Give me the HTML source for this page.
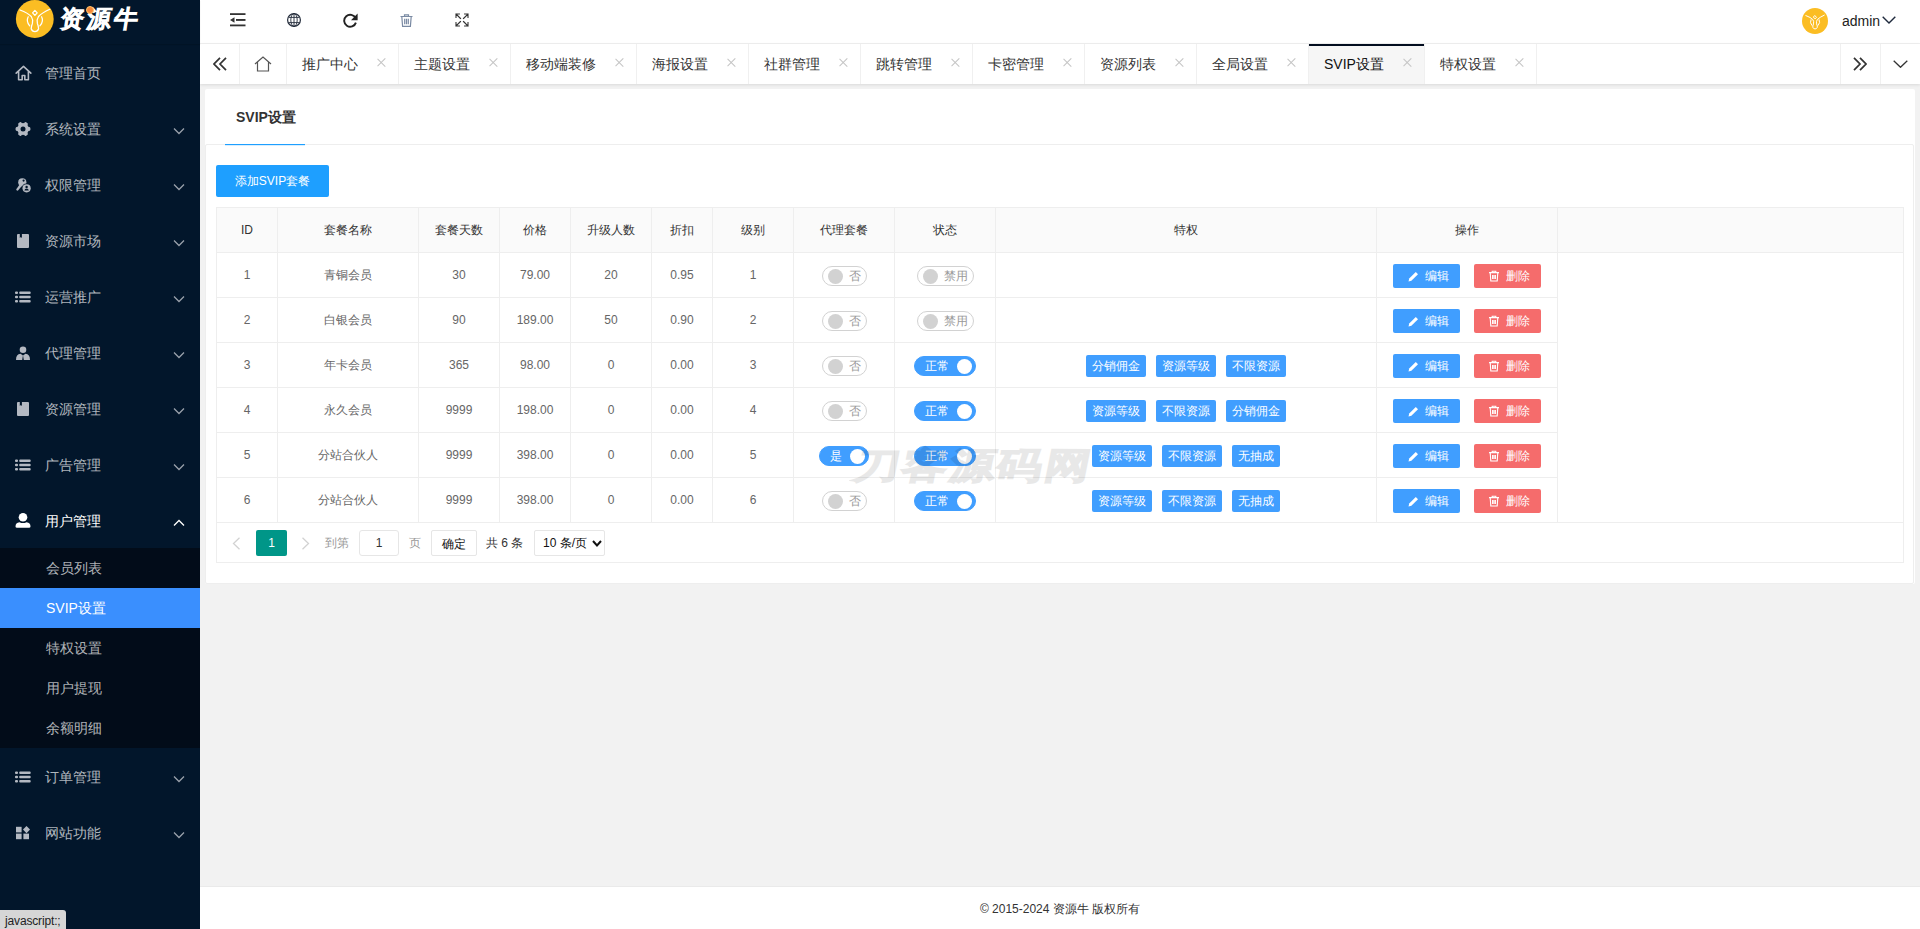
<!DOCTYPE html>
<html><head><meta charset="utf-8">
<style>
*{margin:0;padding:0;box-sizing:border-box}
html,body{width:1920px;height:929px;overflow:hidden}
body{position:relative;background:#f2f2f2;font-family:"Liberation Sans",sans-serif;font-size:14px;color:#333}
.abs{position:absolute}
/* sidebar */
#side{position:absolute;left:0;top:0;width:200px;height:929px;background:#02162b;z-index:5}
#logo{position:absolute;left:0;top:0;width:200px;height:44px;background:#02162b;box-shadow:0 1px 1px rgba(0,0,0,.12)}
.mi{position:absolute;left:0;width:200px;height:56px;color:rgba(255,255,255,.7)}
.mi .t{position:absolute;left:45px;top:1px;line-height:56px;font-size:14px}
.mi .ic{position:absolute;left:15px;top:20px}
.mi .ar{position:absolute;left:173px;top:27px;width:12px;height:8px}
#sub{position:absolute;left:0;top:548px;width:200px;height:200px;background:#020c19}
.si{position:absolute;left:0;width:200px;height:40px;line-height:41px;padding-left:46px;font-size:14px;color:rgba(255,255,255,.7)}
/* header */
#hdr{position:absolute;left:200px;top:0;width:1720px;height:44px;background:#fff;border-bottom:1px solid #f0f0f0}
#tabs{position:absolute;left:200px;top:44px;width:1720px;height:40px;background:#fff;box-shadow:0 1px 3px rgba(0,0,0,.1)}
.tab{position:absolute;top:0;height:40px;border-right:1px solid #f0f0f0;font-size:14px;line-height:40px;color:#333}
.tab .tx{position:absolute;left:15px;top:0}
.tab .x{position:absolute;right:12px;top:14px;width:9px;height:9px}
.tab .x:before,.tab .x:after{content:"";position:absolute;left:-1px;top:4px;width:10.5px;height:1px;background:#c4c4c4;transform:rotate(45deg)}
.tab .x:after{transform:rotate(-45deg)}
.tab.act{background:#f6f6f6;color:#111}
.tab.act:before{content:"";position:absolute;left:0;top:0;right:0;height:2px;background:#020d1f}
/* card */
#card{position:absolute;left:205px;top:89px;width:1710px;height:495px;background:#fff;border-radius:2px}
.ttl{font-size:14px;font-weight:bold;color:#333}
.btnadd{background:#1e9fff;color:#fff;font-size:12px;text-align:center;border-radius:2px}
.hl{height:1px;background:#eee}
.vl{width:1px;background:#eee}
.th,.td{height:44px;line-height:44px;text-align:center;font-size:12px;white-space:nowrap}
.th{color:#333}
.td{color:#666}
.sw{height:20px;border:1px solid #d2d2d2;border-radius:20px;background:#fff}
.sw i{position:absolute;top:2px;width:15px;height:15px;border-radius:50%;background:#d2d2d2}
.sw em{position:absolute;top:0;line-height:18px;font-size:12px;font-style:normal;color:#999}
.sw.on{border-color:#409eff;background:#409eff}
.sw.on i{background:#fff}
.sw.on em{color:#fff}
.tag{height:22px;line-height:22px;background:#409eff;color:#fff;font-size:12px;text-align:center;border-radius:2px}
.obtn{width:67px;height:24px;line-height:24px;color:#fff;font-size:12px;border-radius:2px}
.obtn .ico{position:absolute}
.obtn span{position:absolute;left:32px;top:0}
.pg{height:26px;line-height:26px;font-size:12px}
.wm{font-size:36px;line-height:44px;color:#000;-webkit-text-stroke:2.6px #000;opacity:.085;letter-spacing:2px;transform:matrix(1.25,0,-0.2,1,0,0);transform-origin:0 50%;white-space:nowrap}
#foot{position:absolute;left:200px;top:886px;width:1720px;height:43px;background:#fff;border-top:1px solid #eaeaea;text-align:center;font-size:12px;line-height:45px;color:#333}
#status{position:absolute;z-index:10;left:0;top:910px;width:66px;height:19px;overflow:hidden;background:#d6d6d6;border-top-right-radius:3px;font-size:12px;line-height:23px;padding-left:5px;color:#222;letter-spacing:-0.15px}
</style></head>
<body>
<div id="side">
  <div id="logo">
    <svg class="abs" style="left:14px;top:0" width="42" height="40" viewBox="0 0 42 40">
      <circle cx="20.8" cy="19" r="18.9" fill="#fbbd23"/>
      
      <g fill="none" stroke="#fff" stroke-width="1.25" stroke-linecap="round" stroke-linejoin="round">
        <path d="M6 10 Q14 13 17.3 16.5 Q19.3 19.5 18.4 23.5 Q17.2 26.5 17.2 28.8 Q18.2 31.6 20.9 31.6 Q23.6 31.6 24.6 28.8 Q24.6 26.5 23.4 23.5 Q22.5 19.5 24.5 16.5 Q28 13 35.8 9.3"/>
        <path d="M20.9 10.4 L23.2 12.9 L20.9 15.4 L18.6 12.9z"/>
        <path d="M14.2 16.8 Q11.8 21.5 15.7 25.9 M27.6 16.8 Q30 21.5 25.9 25.9"/>
      </g>
    </svg>
    <div class="abs" style="left:58px;top:5px;font-size:24px;line-height:28px;color:#fff;-webkit-text-stroke:1.5px #fff;letter-spacing:3px;transform:skewX(-9deg);transform-origin:0 100%">资源牛</div>
    <div class="abs" style="left:86px;top:6px;width:8px;height:8px;border-radius:50%;background:#f5883a;border:1px solid #ffc46a"></div>
  </div>
  <!-- 管理首页 -->
  <div class="mi" style="top:44px"><span class="t">管理首页</span>
    <svg class="ic" style="left:14.5px;top:21px" width="17" height="16" viewBox="0 0 18 17"><path d="M1.2 8.6 L9 1.4 L16.8 8.6 M3.8 6.4 V15.6 H7.6 V11.2 H10.4 V15.6 H14.2 V6.4" fill="none" stroke="#b4b9c2" stroke-width="1.7" stroke-linejoin="round" stroke-linecap="round"/></svg>
  </div>
  <div class="mi" style="top:100px"><span class="t">系统设置</span>
    <svg class="ic" style="left:15px;top:21px" width="16" height="16" viewBox="0 0 16 16"><g fill="#b4b9c2"><rect x="6.1" y="0.6" width="3.8" height="3.4" rx="1.3" transform="rotate(30 8 8)"/><rect x="6.1" y="0.6" width="3.8" height="3.4" rx="1.3" transform="rotate(90 8 8)"/><rect x="6.1" y="0.6" width="3.8" height="3.4" rx="1.3" transform="rotate(150 8 8)"/><rect x="6.1" y="0.6" width="3.8" height="3.4" rx="1.3" transform="rotate(210 8 8)"/><rect x="6.1" y="0.6" width="3.8" height="3.4" rx="1.3" transform="rotate(270 8 8)"/><rect x="6.1" y="0.6" width="3.8" height="3.4" rx="1.3" transform="rotate(330 8 8)"/><circle cx="8" cy="8" r="5.9"/></g><circle cx="8" cy="8" r="2.5" fill="#02162b"/></svg>
    <svg class="ar" viewBox="0 0 12 8"><path d="M1 1.5 L6 6.5 L11 1.5" fill="none" stroke="#9aa1ab" stroke-width="1.3"/></svg>
  </div>
  <div class="mi" style="top:156px"><span class="t">权限管理</span>
    <svg class="ic" style="left:16px;top:22px" width="15" height="15" viewBox="0 0 15 15"><g fill="#b4b9c2"><circle cx="6.3" cy="4.3" r="4.1"/><path d="M3.6 6.4 L0.3 11.2 Q0 12.2 1 12.6 L1.8 12.8 L5.6 8.2z"/></g><circle cx="7.6" cy="2.6" r="1.1" fill="#02162b"/><circle cx="10.6" cy="10.3" r="4.9" fill="#02162b"/><circle cx="10.6" cy="10.3" r="4.1" fill="#b4b9c2"/><g fill="#02162b"><circle cx="10.6" cy="8.9" r="1.2"/><path d="M8.4 12.4 Q8.6 10.6 10.6 10.6 Q12.6 10.6 12.8 12.4z"/></g></svg>
    <svg class="ar" viewBox="0 0 12 8"><path d="M1 1.5 L6 6.5 L11 1.5" fill="none" stroke="#9aa1ab" stroke-width="1.3"/></svg>
  </div>
  <div class="mi" style="top:212px"><span class="t">资源市场</span>
    <svg class="ic" style="left:17px;top:22px" width="12" height="14" viewBox="0 0 12 14"><path fill="#b4b9c2" d="M1 0h10a1 1 0 0 1 1 1v12a1 1 0 0 1-1 1H1a1 1 0 0 1-1-1V1a1 1 0 0 1 1-1z M2.8 0v4l1.05-0.9L4.9 4V0z" fill-rule="evenodd"/></svg>
    <svg class="ar" viewBox="0 0 12 8"><path d="M1 1.5 L6 6.5 L11 1.5" fill="none" stroke="#9aa1ab" stroke-width="1.3"/></svg>
  </div>
  <div class="mi" style="top:268px"><span class="t">运营推广</span>
    <svg class="ic" style="left:15px;top:23px" width="16" height="12" viewBox="0 0 16 12"><g fill="#b4b9c2"><rect x="0" y="0.5" width="3" height="2.6" rx="1"/><rect x="4.2" y="0.5" width="11.5" height="2.6" rx="1"/><rect x="0" y="4.7" width="3" height="2.6" rx="1"/><rect x="4.2" y="4.7" width="11.5" height="2.6" rx="1"/><rect x="0" y="8.9" width="3" height="2.6" rx="1"/><rect x="4.2" y="8.9" width="11.5" height="2.6" rx="1"/></g></svg>
    <svg class="ar" viewBox="0 0 12 8"><path d="M1 1.5 L6 6.5 L11 1.5" fill="none" stroke="#9aa1ab" stroke-width="1.3"/></svg>
  </div>
  <div class="mi" style="top:324px"><span class="t">代理管理</span>
    <svg class="ic" style="left:16px;top:22px" width="14" height="14" viewBox="0 0 14 14"><g fill="#b4b9c2"><circle cx="7" cy="3.8" r="3.3"/><path d="M0 14 Q0 8 4.5 7.8 L7 9.5 L9.5 7.8 Q14 8 14 14z"/></g><path d="M7 9.3 L6.2 14 H7.8z" fill="#02162b"/></svg>
    <svg class="ar" viewBox="0 0 12 8"><path d="M1 1.5 L6 6.5 L11 1.5" fill="none" stroke="#9aa1ab" stroke-width="1.3"/></svg>
  </div>
  <div class="mi" style="top:380px"><span class="t">资源管理</span>
    <svg class="ic" style="left:17px;top:22px" width="12" height="14" viewBox="0 0 12 14"><path fill="#b4b9c2" d="M1 0h10a1 1 0 0 1 1 1v12a1 1 0 0 1-1 1H1a1 1 0 0 1-1-1V1a1 1 0 0 1 1-1z M2.8 0v4l1.05-0.9L4.9 4V0z" fill-rule="evenodd"/></svg>
    <svg class="ar" viewBox="0 0 12 8"><path d="M1 1.5 L6 6.5 L11 1.5" fill="none" stroke="#9aa1ab" stroke-width="1.3"/></svg>
  </div>
  <div class="mi" style="top:436px"><span class="t">广告管理</span>
    <svg class="ic" style="left:15px;top:23px" width="16" height="12" viewBox="0 0 16 12"><g fill="#b4b9c2"><rect x="0" y="0.5" width="3" height="2.6" rx="1"/><rect x="4.2" y="0.5" width="11.5" height="2.6" rx="1"/><rect x="0" y="4.7" width="3" height="2.6" rx="1"/><rect x="4.2" y="4.7" width="11.5" height="2.6" rx="1"/><rect x="0" y="8.9" width="3" height="2.6" rx="1"/><rect x="4.2" y="8.9" width="11.5" height="2.6" rx="1"/></g></svg>
    <svg class="ar" viewBox="0 0 12 8"><path d="M1 1.5 L6 6.5 L11 1.5" fill="none" stroke="#9aa1ab" stroke-width="1.3"/></svg>
  </div>
  <div class="mi" style="top:492px;color:#fff"><span class="t">用户管理</span>
    <svg class="ic" style="left:15px;top:21px" width="16" height="15" viewBox="0 0 16 15"><g fill="#fff"><circle cx="8" cy="4.3" r="4.3"/><path d="M0.5 13.5 Q0.5 9.5 4.5 9.2 Q8 11 11.5 9.2 Q15.5 9.5 15.5 13.5 Q15.5 14.8 14 14.8 H2 Q0.5 14.8 0.5 13.5z"/></g></svg>
    <svg class="ar" viewBox="0 0 12 8"><path d="M1 6.5 L6 1.5 L11 6.5" fill="none" stroke="#fff" stroke-width="1.3"/></svg>
  </div>
  <div id="sub">
    <div class="si" style="top:0">会员列表</div>
    <div class="si" style="top:40px;background:#3a8ffe;color:#fff">SVIP设置</div>
    <div class="si" style="top:80px">特权设置</div>
    <div class="si" style="top:120px">用户提现</div>
    <div class="si" style="top:160px">余额明细</div>
  </div>
  <div class="mi" style="top:748px"><span class="t">订单管理</span>
    <svg class="ic" style="left:15px;top:23px" width="16" height="12" viewBox="0 0 16 12"><g fill="#b4b9c2"><rect x="0" y="0.5" width="3" height="2.6" rx="1"/><rect x="4.2" y="0.5" width="11.5" height="2.6" rx="1"/><rect x="0" y="4.7" width="3" height="2.6" rx="1"/><rect x="4.2" y="4.7" width="11.5" height="2.6" rx="1"/><rect x="0" y="8.9" width="3" height="2.6" rx="1"/><rect x="4.2" y="8.9" width="11.5" height="2.6" rx="1"/></g></svg>
    <svg class="ar" viewBox="0 0 12 8"><path d="M1 1.5 L6 6.5 L11 1.5" fill="none" stroke="#9aa1ab" stroke-width="1.3"/></svg>
  </div>
  <div class="mi" style="top:804px"><span class="t">网站功能</span>
    <svg class="ic" style="left:16px;top:22px" width="14" height="14" viewBox="0 0 14 14"><g fill="#b4b9c2"><rect x="0" y="0.8" width="5.6" height="5.6"/><path d="M10.5 0 L14 3.6 L10.5 7.2 L7 3.6z"/><rect x="0" y="7.6" width="5.6" height="5.6"/><rect x="7.4" y="7.6" width="5.6" height="5.6"/></g></svg>
    <svg class="ar" viewBox="0 0 12 8"><path d="M1 1.5 L6 6.5 L11 1.5" fill="none" stroke="#9aa1ab" stroke-width="1.3"/></svg>
  </div>
</div>
<div id="hdr">
  <svg class="abs" style="left:30px;top:13px" width="16" height="14" viewBox="0 0 16 14"><g fill="#333"><rect x="0" y="0.2" width="15.5" height="1.8"/><rect x="6" y="6" width="9.5" height="1.9"/><rect x="0" y="11.5" width="15.5" height="1.8"/><path d="M0 7 L4.5 4.3 V9.7z"/></g></svg>
  <svg class="abs" style="left:87px;top:13px" width="14" height="14" viewBox="0 0 14 14"><g fill="none" stroke="#222b3a"><circle cx="7" cy="7" r="6.4" stroke-width="1.2"/><ellipse cx="7" cy="7" rx="3.2" ry="6.4" stroke-width="0.9"/><path d="M7 0.6V13.4M2 4.4H12M2 9.6H12" stroke-width="0.9"/></g></svg>
  <svg class="abs" style="left:143px;top:13px" width="15" height="15" viewBox="0 0 15 15"><path d="M12.6 5.2 A6 6 0 1 0 12.9 9.6" fill="none" stroke="#222" stroke-width="1.9"/><path d="M14.6 0.6 V7.2 H8z" fill="#222"/></svg>
  <svg class="abs" style="left:200px;top:14px" width="13" height="13" viewBox="0 0 13 13"><g fill="none" stroke="#7a8aa3" stroke-width="1.2"><path d="M0.5 2.5H12.5M4.5 2.5V0.8H8.5V2.5M1.8 2.5L2.6 12.3H10.4L11.2 2.5M4.7 4.8V10.2M6.5 4.8V10.2M8.3 4.8V10.2"/></g></svg>
  <svg class="abs" style="left:255px;top:13px" width="14" height="14" viewBox="0 0 14 14"><g fill="none" stroke="#333" stroke-width="1.1" stroke-linecap="square"><path d="M1 1L5.5 5.5M1 1V4.4M1 1H4.4 M13 1L8.5 5.5M13 1V4.4M13 1H9.6 M1 13L5.5 8.5M1 13V9.6M1 13H4.4 M13 13L8.5 8.5M13 13V9.6M13 13H9.6"/></g></svg>
  <svg class="abs" style="left:1602px;top:8px" width="26" height="26" viewBox="0 0 42 42">
    <circle cx="21" cy="21" r="21" fill="#fbbd23"/>
    <g transform="translate(0.2,2.2)" fill="none" stroke="#fff" stroke-width="1.6" stroke-linecap="round" stroke-linejoin="round">
      <path d="M6 10 Q14 13 17.3 16.5 Q19.3 19.5 18.4 23.5 Q17.2 26.5 17.2 28.8 Q18.2 31.6 20.9 31.6 Q23.6 31.6 24.6 28.8 Q24.6 26.5 23.4 23.5 Q22.5 19.5 24.5 16.5 Q28 13 35.8 9.3"/>
      <path d="M20.9 10.4 L23.2 12.9 L20.9 15.4 L18.6 12.9z"/>
      <path d="M14.2 16.8 Q11.8 21.5 15.7 25.9 M27.6 16.8 Q30 21.5 25.9 25.9"/>
    </g>
  </svg>
  <div class="abs" style="left:1642px;top:13px;font-size:14px;line-height:17px;color:#222">admin</div>
  <svg class="abs" style="left:1682px;top:16px" width="14" height="8" viewBox="0 0 14 8"><path d="M0.7 0.7 L7 7 L13.3 0.7" fill="none" stroke="#1f2a3d" stroke-width="1.4"/></svg>
</div>
<div id="tabs">
  <div class="tab" style="left:0;width:40px"><svg class="abs" style="left:13px;top:13px" width="14" height="14" viewBox="0 0 14 14"><path d="M7 0.8 L1 7 L7 13.2 M13 0.8 L7 7 L13 13.2" fill="none" stroke="#333" stroke-width="1.7"/></svg></div>
  <div class="tab" style="left:40px;width:47px"><svg class="abs" style="left:14px;top:12px" width="18" height="16" viewBox="0 0 18 16"><path d="M1 8 L9 1 L17 8 M3.5 6 V15 H14.5 V6" fill="none" stroke="#555" stroke-width="1.2"/></svg></div>
  <div class="tab" style="left:87px;width:112px"><span class="tx">推广中心</span><i class="x"></i></div>
  <div class="tab" style="left:199px;width:112px"><span class="tx">主题设置</span><i class="x"></i></div>
  <div class="tab" style="left:311px;width:126px"><span class="tx">移动端装修</span><i class="x"></i></div>
  <div class="tab" style="left:437px;width:112px"><span class="tx">海报设置</span><i class="x"></i></div>
  <div class="tab" style="left:549px;width:112px"><span class="tx">社群管理</span><i class="x"></i></div>
  <div class="tab" style="left:661px;width:112px"><span class="tx">跳转管理</span><i class="x"></i></div>
  <div class="tab" style="left:773px;width:112px"><span class="tx">卡密管理</span><i class="x"></i></div>
  <div class="tab" style="left:885px;width:112px"><span class="tx">资源列表</span><i class="x"></i></div>
  <div class="tab" style="left:997px;width:112px"><span class="tx">全局设置</span><i class="x"></i></div>
  <div class="tab act" style="left:1109px;width:116px"><span class="tx">SVIP设置</span><i class="x"></i></div>
  <div class="tab" style="left:1225px;width:112px"><span class="tx">特权设置</span><i class="x"></i></div>
  <div class="tab" style="left:1640px;width:41px;border-left:1px solid #f0f0f0;border-right:0"><svg class="abs" style="left:12px;top:13px" width="14" height="14" viewBox="0 0 14 14"><path d="M1 0.8 L7 7 L1 13.2 M7 0.8 L13 7 L7 13.2" fill="none" stroke="#333" stroke-width="1.7"/></svg></div>
  <div class="tab" style="left:1680px;width:40px;border-left:1px solid #f0f0f0;border-right:0"><svg class="abs" style="left:12px;top:16px" width="15" height="8" viewBox="0 0 15 8"><path d="M0.7 0.7 L7.5 7.3 L14.3 0.7" fill="none" stroke="#333" stroke-width="1.3"/></svg></div>
</div>
<div id="card">
<div class="abs ttl" style="left:31px;top:1px;height:55px;line-height:55px">SVIP设置</div>
<div class="abs" style="left:20px;top:55px;width:80px;height:1px;background:#1e9fff;box-shadow:0 0.5px 0 rgba(30,159,255,.35)"></div>
<div class="abs" style="left:0;top:55px;width:1709px;height:440px;border:1px solid #eee;border-radius:2px;background:#fff;"></div>
<div class="abs" style="left:20px;top:55px;width:80px;height:1px;background:#1e9fff;box-shadow:0 0.5px 0 rgba(30,159,255,.35)"></div>
<div class="abs btnadd" style="left:11px;top:76px;width:113px;height:32px;line-height:32px">添加SVIP套餐</div>
<div class="abs" style="left:11px;top:118px;width:1688px;height:356px;border:1px solid #eee"></div>
<div class="abs" style="left:12px;top:119px;width:1686px;height:44px;background:#fafafa"></div>
<div class="abs hl" style="left:11px;top:163px;width:1687px"></div>
<div class="abs hl" style="left:11px;top:208px;width:1341px"></div>
<div class="abs hl" style="left:11px;top:253px;width:1341px"></div>
<div class="abs hl" style="left:11px;top:298px;width:1341px"></div>
<div class="abs hl" style="left:11px;top:343px;width:1341px"></div>
<div class="abs hl" style="left:11px;top:388px;width:1341px"></div>
<div class="abs hl" style="left:11px;top:433px;width:1687px"></div>
<div class="abs vl" style="left:72px;top:118px;height:315px"></div>
<div class="abs vl" style="left:213px;top:118px;height:315px"></div>
<div class="abs vl" style="left:294px;top:118px;height:315px"></div>
<div class="abs vl" style="left:365px;top:118px;height:315px"></div>
<div class="abs vl" style="left:446px;top:118px;height:315px"></div>
<div class="abs vl" style="left:507px;top:118px;height:315px"></div>
<div class="abs vl" style="left:588px;top:118px;height:315px"></div>
<div class="abs vl" style="left:689px;top:118px;height:315px"></div>
<div class="abs vl" style="left:790px;top:118px;height:315px"></div>
<div class="abs vl" style="left:1171px;top:118px;height:315px"></div>
<div class="abs vl" style="left:1352px;top:118px;height:315px"></div>
<div class="abs th" style="left:12px;top:119px;width:60px">ID</div>
<div class="abs th" style="left:73px;top:119px;width:140px">套餐名称</div>
<div class="abs th" style="left:214px;top:119px;width:80px">套餐天数</div>
<div class="abs th" style="left:295px;top:119px;width:70px">价格</div>
<div class="abs th" style="left:366px;top:119px;width:80px">升级人数</div>
<div class="abs th" style="left:447px;top:119px;width:60px">折扣</div>
<div class="abs th" style="left:508px;top:119px;width:80px">级别</div>
<div class="abs th" style="left:589px;top:119px;width:100px">代理套餐</div>
<div class="abs th" style="left:690px;top:119px;width:100px">状态</div>
<div class="abs th" style="left:791px;top:119px;width:380px">特权</div>
<div class="abs th" style="left:1172px;top:119px;width:180px">操作</div>
<div class="abs td" style="left:12px;top:164px;width:60px">1</div>
<div class="abs td" style="left:73px;top:164px;width:140px">青铜会员</div>
<div class="abs td" style="left:214px;top:164px;width:80px">30</div>
<div class="abs td" style="left:295px;top:164px;width:70px">79.00</div>
<div class="abs td" style="left:366px;top:164px;width:80px">20</div>
<div class="abs td" style="left:447px;top:164px;width:60px">0.95</div>
<div class="abs td" style="left:508px;top:164px;width:80px">1</div>
<div class="abs sw" style="left:617px;top:177px;width:45px"><i style="left:5px"></i><em style="left:26px">否</em></div>
<div class="abs sw" style="left:712px;top:177px;width:57px"><i style="left:5px"></i><em style="left:26px">禁用</em></div>
<div class="abs obtn" style="left:1188px;top:175px;background:#409eff"><svg class="ico" style="left:15px;top:7px" width="11" height="11" viewBox="0 0 11 11"><path d="M0.5 10.5 L1.2 7.6 L7.8 1 L10 3.2 L3.4 9.8z" fill="#fff"/></svg><span>编辑</span></div>
<div class="abs obtn" style="left:1269px;top:175px;background:#f56c6c"><svg class="ico" style="left:14px;top:6px" width="12" height="12" viewBox="0 0 12 12"><path d="M1 2.6H11M4.2 2.6V1.2H7.8V2.6M2.2 2.6L2.8 11H9.2L9.8 2.6M4.6 5V9M6 5V9M7.4 5V9" fill="none" stroke="#fff" stroke-width="1.1"/></svg><span>删除</span></div>
<div class="abs td" style="left:12px;top:209px;width:60px">2</div>
<div class="abs td" style="left:73px;top:209px;width:140px">白银会员</div>
<div class="abs td" style="left:214px;top:209px;width:80px">90</div>
<div class="abs td" style="left:295px;top:209px;width:70px">189.00</div>
<div class="abs td" style="left:366px;top:209px;width:80px">50</div>
<div class="abs td" style="left:447px;top:209px;width:60px">0.90</div>
<div class="abs td" style="left:508px;top:209px;width:80px">2</div>
<div class="abs sw" style="left:617px;top:222px;width:45px"><i style="left:5px"></i><em style="left:26px">否</em></div>
<div class="abs sw" style="left:712px;top:222px;width:57px"><i style="left:5px"></i><em style="left:26px">禁用</em></div>
<div class="abs obtn" style="left:1188px;top:220px;background:#409eff"><svg class="ico" style="left:15px;top:7px" width="11" height="11" viewBox="0 0 11 11"><path d="M0.5 10.5 L1.2 7.6 L7.8 1 L10 3.2 L3.4 9.8z" fill="#fff"/></svg><span>编辑</span></div>
<div class="abs obtn" style="left:1269px;top:220px;background:#f56c6c"><svg class="ico" style="left:14px;top:6px" width="12" height="12" viewBox="0 0 12 12"><path d="M1 2.6H11M4.2 2.6V1.2H7.8V2.6M2.2 2.6L2.8 11H9.2L9.8 2.6M4.6 5V9M6 5V9M7.4 5V9" fill="none" stroke="#fff" stroke-width="1.1"/></svg><span>删除</span></div>
<div class="abs td" style="left:12px;top:254px;width:60px">3</div>
<div class="abs td" style="left:73px;top:254px;width:140px">年卡会员</div>
<div class="abs td" style="left:214px;top:254px;width:80px">365</div>
<div class="abs td" style="left:295px;top:254px;width:70px">98.00</div>
<div class="abs td" style="left:366px;top:254px;width:80px">0</div>
<div class="abs td" style="left:447px;top:254px;width:60px">0.00</div>
<div class="abs td" style="left:508px;top:254px;width:80px">3</div>
<div class="abs sw" style="left:617px;top:267px;width:45px"><i style="left:5px"></i><em style="left:26px">否</em></div>
<div class="abs sw on" style="left:709px;top:267px;width:62px"><em style="left:10px">正常</em><i style="left:42px"></i></div>
<div class="abs tag" style="left:881px;top:266px;width:60px">分销佣金</div>
<div class="abs tag" style="left:951px;top:266px;width:60px">资源等级</div>
<div class="abs tag" style="left:1021px;top:266px;width:60px">不限资源</div>
<div class="abs obtn" style="left:1188px;top:265px;background:#409eff"><svg class="ico" style="left:15px;top:7px" width="11" height="11" viewBox="0 0 11 11"><path d="M0.5 10.5 L1.2 7.6 L7.8 1 L10 3.2 L3.4 9.8z" fill="#fff"/></svg><span>编辑</span></div>
<div class="abs obtn" style="left:1269px;top:265px;background:#f56c6c"><svg class="ico" style="left:14px;top:6px" width="12" height="12" viewBox="0 0 12 12"><path d="M1 2.6H11M4.2 2.6V1.2H7.8V2.6M2.2 2.6L2.8 11H9.2L9.8 2.6M4.6 5V9M6 5V9M7.4 5V9" fill="none" stroke="#fff" stroke-width="1.1"/></svg><span>删除</span></div>
<div class="abs td" style="left:12px;top:299px;width:60px">4</div>
<div class="abs td" style="left:73px;top:299px;width:140px">永久会员</div>
<div class="abs td" style="left:214px;top:299px;width:80px">9999</div>
<div class="abs td" style="left:295px;top:299px;width:70px">198.00</div>
<div class="abs td" style="left:366px;top:299px;width:80px">0</div>
<div class="abs td" style="left:447px;top:299px;width:60px">0.00</div>
<div class="abs td" style="left:508px;top:299px;width:80px">4</div>
<div class="abs sw" style="left:617px;top:312px;width:45px"><i style="left:5px"></i><em style="left:26px">否</em></div>
<div class="abs sw on" style="left:709px;top:312px;width:62px"><em style="left:10px">正常</em><i style="left:42px"></i></div>
<div class="abs tag" style="left:881px;top:311px;width:60px">资源等级</div>
<div class="abs tag" style="left:951px;top:311px;width:60px">不限资源</div>
<div class="abs tag" style="left:1021px;top:311px;width:60px">分销佣金</div>
<div class="abs obtn" style="left:1188px;top:310px;background:#409eff"><svg class="ico" style="left:15px;top:7px" width="11" height="11" viewBox="0 0 11 11"><path d="M0.5 10.5 L1.2 7.6 L7.8 1 L10 3.2 L3.4 9.8z" fill="#fff"/></svg><span>编辑</span></div>
<div class="abs obtn" style="left:1269px;top:310px;background:#f56c6c"><svg class="ico" style="left:14px;top:6px" width="12" height="12" viewBox="0 0 12 12"><path d="M1 2.6H11M4.2 2.6V1.2H7.8V2.6M2.2 2.6L2.8 11H9.2L9.8 2.6M4.6 5V9M6 5V9M7.4 5V9" fill="none" stroke="#fff" stroke-width="1.1"/></svg><span>删除</span></div>
<div class="abs td" style="left:12px;top:344px;width:60px">5</div>
<div class="abs td" style="left:73px;top:344px;width:140px">分站合伙人</div>
<div class="abs td" style="left:214px;top:344px;width:80px">9999</div>
<div class="abs td" style="left:295px;top:344px;width:70px">398.00</div>
<div class="abs td" style="left:366px;top:344px;width:80px">0</div>
<div class="abs td" style="left:447px;top:344px;width:60px">0.00</div>
<div class="abs td" style="left:508px;top:344px;width:80px">5</div>
<div class="abs sw on" style="left:614px;top:357px;width:50px"><em style="left:10px">是</em><i style="left:30px"></i></div>
<div class="abs sw on" style="left:709px;top:357px;width:62px"><em style="left:10px">正常</em><i style="left:42px"></i></div>
<div class="abs tag" style="left:887px;top:356px;width:60px">资源等级</div>
<div class="abs tag" style="left:957px;top:356px;width:60px">不限资源</div>
<div class="abs tag" style="left:1027px;top:356px;width:48px">无抽成</div>
<div class="abs obtn" style="left:1188px;top:355px;background:#409eff"><svg class="ico" style="left:15px;top:7px" width="11" height="11" viewBox="0 0 11 11"><path d="M0.5 10.5 L1.2 7.6 L7.8 1 L10 3.2 L3.4 9.8z" fill="#fff"/></svg><span>编辑</span></div>
<div class="abs obtn" style="left:1269px;top:355px;background:#f56c6c"><svg class="ico" style="left:14px;top:6px" width="12" height="12" viewBox="0 0 12 12"><path d="M1 2.6H11M4.2 2.6V1.2H7.8V2.6M2.2 2.6L2.8 11H9.2L9.8 2.6M4.6 5V9M6 5V9M7.4 5V9" fill="none" stroke="#fff" stroke-width="1.1"/></svg><span>删除</span></div>
<div class="abs td" style="left:12px;top:389px;width:60px">6</div>
<div class="abs td" style="left:73px;top:389px;width:140px">分站合伙人</div>
<div class="abs td" style="left:214px;top:389px;width:80px">9999</div>
<div class="abs td" style="left:295px;top:389px;width:70px">398.00</div>
<div class="abs td" style="left:366px;top:389px;width:80px">0</div>
<div class="abs td" style="left:447px;top:389px;width:60px">0.00</div>
<div class="abs td" style="left:508px;top:389px;width:80px">6</div>
<div class="abs sw" style="left:617px;top:402px;width:45px"><i style="left:5px"></i><em style="left:26px">否</em></div>
<div class="abs sw on" style="left:709px;top:402px;width:62px"><em style="left:10px">正常</em><i style="left:42px"></i></div>
<div class="abs tag" style="left:887px;top:401px;width:60px">资源等级</div>
<div class="abs tag" style="left:957px;top:401px;width:60px">不限资源</div>
<div class="abs tag" style="left:1027px;top:401px;width:48px">无抽成</div>
<div class="abs obtn" style="left:1188px;top:400px;background:#409eff"><svg class="ico" style="left:15px;top:7px" width="11" height="11" viewBox="0 0 11 11"><path d="M0.5 10.5 L1.2 7.6 L7.8 1 L10 3.2 L3.4 9.8z" fill="#fff"/></svg><span>编辑</span></div>
<div class="abs obtn" style="left:1269px;top:400px;background:#f56c6c"><svg class="ico" style="left:14px;top:6px" width="12" height="12" viewBox="0 0 12 12"><path d="M1 2.6H11M4.2 2.6V1.2H7.8V2.6M2.2 2.6L2.8 11H9.2L9.8 2.6M4.6 5V9M6 5V9M7.4 5V9" fill="none" stroke="#fff" stroke-width="1.1"/></svg><span>删除</span></div>
<svg class="abs" style="left:27px;top:448px" width="9" height="13" viewBox="0 0 9 13"><path d="M7.5 0.8 L1.5 6.5 L7.5 12.2" fill="none" stroke="#d2d2d2" stroke-width="1.3"/></svg>
<div class="abs" style="left:51px;top:441px;width:31px;height:26px;line-height:26px;background:#009688;color:#fff;text-align:center;border-radius:2px;font-size:12px">1</div>
<svg class="abs" style="left:96px;top:448px" width="9" height="13" viewBox="0 0 9 13"><path d="M1.5 0.8 L7.5 6.5 L1.5 12.2" fill="none" stroke="#d2d2d2" stroke-width="1.3"/></svg>
<div class="abs pg" style="left:120px;top:441px;color:#999">到第</div>
<div class="abs" style="left:154px;top:441px;width:40px;height:26px;line-height:24px;border:1px solid #e6e6e6;border-radius:3px;text-align:center;font-size:12px;color:#333">1</div>
<div class="abs pg" style="left:204px;top:441px;color:#999">页</div>
<div class="abs" style="left:226px;top:441px;width:46px;height:26px;line-height:26px;border:1px solid #e6e6e6;border-radius:2px;text-align:center;font-size:12px;color:#111">确定</div>
<div class="abs pg" style="left:281px;top:441px;color:#333;word-spacing:0">共 6 条</div>
<div class="abs" style="left:329px;top:441px;width:71px;height:26px;line-height:24px;border:1px solid #e6e6e6;border-radius:2px;font-size:12px;color:#111;padding-left:8px">10 条/页<svg class="abs" style="left:57px;top:9px" width="10" height="7" viewBox="0 0 10 7"><path d="M1 1 L5 5.5 L9 1" fill="none" stroke="#111" stroke-width="2"/></svg></div>
<div class="abs wm" style="left:650px;top:355px">刀客源码网</div>
</div>
<div id="foot">© 2015-2024 资源牛 版权所有</div>
<div id="status">javascript:;</div>
</body></html>
